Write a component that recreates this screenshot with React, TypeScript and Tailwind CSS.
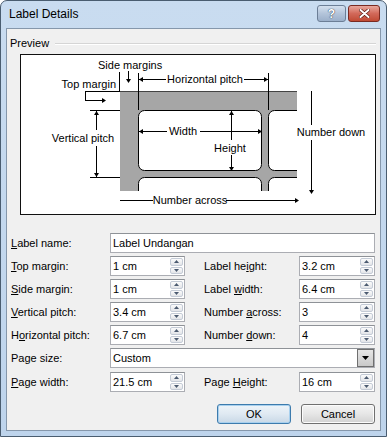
import React from 'react'

const font = "font-['Liberation_Sans',Arial,sans-serif]"

// accelerator key underline, like a Windows dialog label
function Acc({ text, at }: { text: string; at?: number }) {
  if (at === undefined) return <>{text}</>
  return (
    <>
      {text.slice(0, at)}
      <span className="underline underline-offset-[1px]">{text[at]}</span>
      {text.slice(at + 1)}
    </>
  )
}

function Tri({ up }: { up?: boolean }) {
  return (
    <svg width="5" height="3" viewBox="0 0 5 3" className="block">
      <polygon points={up ? '2.5,0 5,3 0,3' : '0,0 5,0 2.5,3'} fill="#4b5a70" />
    </svg>
  )
}

function SpinField({ value, w = 'w-[75px]' }: { value: string; w?: string }) {
  return (
    <div className={`flex h-[20px] ${w} border border-[#abadb3] border-t-[#8e9297] bg-white`}>
      <div className="flex-1 pl-[2px] leading-[18px]">{value}</div>
      <div className="flex w-[15px] flex-col gap-[1px] p-[1px]">
        <div className="flex flex-1 items-center justify-center rounded-[2px] border border-[#c4cbd6] bg-linear-to-b from-[#fbfbfb] to-[#e3e5e9]">
          <Tri up />
        </div>
        <div className="flex flex-1 items-center justify-center rounded-[2px] border border-[#c4cbd6] bg-linear-to-b from-[#fbfbfb] to-[#e3e5e9]">
          <Tri />
        </div>
      </div>
    </div>
  )
}

function Lbl({ text, at }: { text: string; at?: number }) {
  return (
    <div className="flex h-[20px] items-center">
      <span>
        <Acc text={text} at={at} />
      </span>
    </div>
  )
}

const ah = {
  r: (x: number, y: number) => `${x},${y} ${x - 4},${y - 2.5} ${x - 4},${y + 2.5}`,
  l: (x: number, y: number) => `${x},${y} ${x + 4},${y - 2.5} ${x + 4},${y + 2.5}`,
  d: (x: number, y: number) => `${x},${y} ${x - 2.5},${y - 4} ${x + 2.5},${y - 4}`,
  u: (x: number, y: number) => `${x},${y} ${x - 2.5},${y + 4} ${x + 2.5},${y + 4}`,
}

function Diagram() {
  // coordinates are page pixels; viewBox starts at the inner corner of the preview box
  const lines: [number, number, number, number][] = [
    [128.5, 70, 128.5, 79],
    [119.5, 71, 119.5, 90],
    [138.5, 72, 138.5, 109],
    [268.5, 72, 268.5, 109],
    [139, 78.5, 166, 78.5],
    [244, 78.5, 268, 78.5],
    [85, 90.5, 120, 90.5],
    [85.5, 90, 85.5, 99.5],
    [85, 99.5, 103, 99.5],
    [90, 109.5, 120, 109.5],
    [90, 176.5, 120, 176.5],
    [96.5, 110, 96.5, 129],
    [96.5, 145, 96.5, 176],
    [139, 130.5, 167, 130.5],
    [200, 130.5, 262, 130.5],
    [231.5, 110, 231.5, 139],
    [231.5, 154, 231.5, 170],
    [311.5, 90, 311.5, 124],
    [311.5, 139, 311.5, 190],
    [120, 199.5, 153, 199.5],
    [226, 199.5, 296, 199.5],
  ]
  const heads = [
    ah.d(128.5, 82),
    ah.l(139, 78.5),
    ah.r(268, 78.5),
    ah.r(106, 99.5),
    ah.u(96.5, 110),
    ah.d(96.5, 176),
    ah.l(139, 130.5),
    ah.r(262, 130.5),
    ah.u(231.5, 110),
    ah.d(231.5, 170),
    ah.d(311.5, 193),
    ah.r(299, 199.5),
  ]
  return (
    <svg width="354" height="159" viewBox="21 54 354 159" className="block">
      <defs>
        <clipPath id="sheet">
          <rect x="120" y="90" width="177" height="100" />
        </clipPath>
      </defs>
      <rect x="120" y="90" width="177" height="100" fill="#a6a6a6" />
      <g clipPath="url(#sheet)" fill="#fff" stroke="#000" strokeWidth="1">
        <rect x="138.5" y="109.5" width="123" height="60" rx="6" />
        <rect x="268.5" y="109.5" width="60" height="60" rx="6" />
        <rect x="138.5" y="176.5" width="123" height="40" rx="6" />
        <rect x="268.5" y="176.5" width="60" height="40" rx="6" />
        <line x1="120" y1="90.5" x2="297" y2="90.5" stroke="#444" />
      </g>
      <g stroke="#000" strokeWidth="1" shapeRendering="crispEdges">
        {lines.map(([x1, y1, x2, y2], i) => (
          <line key={i} x1={x1} y1={y1} x2={x2} y2={y2} />
        ))}
      </g>
      <g fill="#000">
        {heads.map((p, i) => (
          <polygon key={i} points={p} />
        ))}
      </g>
      <g fontFamily="'Liberation Sans', Arial, sans-serif" fontSize="11" fill="#000">
        <text x="98" y="68">Side margins</text>
        <text x="205" y="82" textAnchor="middle">Horizontal pitch</text>
        <text x="116" y="87" textAnchor="end">Top margin</text>
        <text x="83" y="141" textAnchor="middle">Vertical pitch</text>
        <text x="183" y="134" textAnchor="middle">Width</text>
        <text x="230" y="151" textAnchor="middle">Height</text>
        <text x="331" y="135" textAnchor="middle">Number down</text>
        <text x="190" y="203" textAnchor="middle">Number across</text>
      </g>
    </svg>
  )
}

export default function App() {
  return (
    <div className={`h-[437px] w-[387px] bg-white text-[11px] text-black ${font}`}>
      <div className="flex h-full w-full flex-col rounded-t-[7px] border border-[#4a5d70] bg-linear-to-b from-[#c9dcf0] to-[#bed4ec]">
        {/* Title bar */}
        <div className="flex h-[27px] items-start pl-[8px] pr-[6px]">
          <span className="mt-[6px] text-[12px] leading-[14px] text-black">Label Details</span>
          <div className="ml-auto mt-[4px] flex gap-[2px]">
            <div className="flex h-[17px] w-[29px] items-center justify-center rounded-[3px] border border-[#6c7e96] bg-linear-to-b from-[#d4e0ee] via-[#b3c4da] to-[#9cb0ca]">
              <span className="text-[12px] font-bold leading-none text-white [text-shadow:0_0_1px_#2c3a4c,0_0_1px_#2c3a4c]">?</span>
            </div>
            <div className="flex h-[17px] w-[32px] items-center justify-center rounded-[3px] border border-[#7a2a22] bg-linear-to-b from-[#e8a79d] via-[#d2695a] to-[#c04a34]">
              <svg width="11" height="9" viewBox="0 0 11 9">
                <path d="M1.5 1 L9.5 8 M9.5 1 L1.5 8" stroke="#5a1a12" strokeWidth="3.4" strokeLinecap="round" />
                <path d="M1.5 1 L9.5 8 M9.5 1 L1.5 8" stroke="#fff" strokeWidth="2" strokeLinecap="round" />
              </svg>
            </div>
          </div>
        </div>

        {/* Client area */}
        <div className="mx-[5px] mb-[5px] flex flex-1 flex-col border border-[#8597ab] bg-[#f0f0f0]">
          <div className="mt-[8px] flex h-[13px] items-center pl-[3px] pr-[4px]">
            <span>Preview</span>
            <div className="ml-[6px] flex-1 border-t border-b border-t-[#d5d5d5] border-b-white" />
          </div>

          <div className="ml-[13px] mt-[4px] h-[161px] w-[356px] border border-[#111] bg-white">
            <Diagram />
          </div>

          <div className="ml-[4px] mt-[18px] grid grid-cols-[99px_75px_19px_95px_76px] gap-y-[3px]">
            <Lbl text="Label name:" at={0} />
            <div className="col-span-4 h-[20px] border border-[#abadb3] border-t-[#8e9297] bg-white pl-[2px] leading-[18px]">
              Label Undangan
            </div>

            <Lbl text="Top margin:" at={0} />
            <SpinField value="1 cm" />
            <div />
            <Lbl text="Label height:" at={8} />
            <SpinField value="3.2 cm" w="w-[76px]" />

            <Lbl text="Side margin:" at={0} />
            <SpinField value="1 cm" />
            <div />
            <Lbl text="Label width:" at={6} />
            <SpinField value="6.4 cm" w="w-[76px]" />

            <Lbl text="Vertical pitch:" at={0} />
            <SpinField value="3.4 cm" />
            <div />
            <Lbl text="Number across:" at={7} />
            <SpinField value="3" w="w-[76px]" />

            <Lbl text="Horizontal pitch:" at={1} />
            <SpinField value="6.7 cm" />
            <div />
            <Lbl text="Number down:" at={7} />
            <SpinField value="4" w="w-[76px]" />

            <Lbl text="Page size:" />
            <div className="col-span-4 flex h-[20px] border border-[#abadb3] border-t-[#8e9297] bg-white">
              <div className="flex-1 pl-[2px] leading-[18px]">Custom</div>
              <div className="flex w-[17px] items-center justify-center border border-[#6f6f6f] bg-linear-to-b from-[#e6e6e6] to-[#c9c9c9]">
                <svg width="7" height="4" viewBox="0 0 7 4">
                  <polygon points="0,0 7,0 3.5,4" fill="#000" />
                </svg>
              </div>
            </div>

            <div className="col-span-5 mt-[1px] grid grid-cols-[99px_75px_19px_95px_76px]">
              <Lbl text="Page width:" at={0} />
              <SpinField value="21.5 cm" />
              <div />
              <Lbl text="Page Height:" at={5} />
              <SpinField value="16 cm" w="w-[76px]" />
            </div>
          </div>

          <div className="mt-[12px] flex justify-end gap-[10px] pr-[5px]">
            <button className="h-[20px] w-[74px] rounded-[3px] border border-[#3d7bad] bg-linear-to-b from-[#eef4f9] via-[#dfe9f2] to-[#c8d8e6] shadow-[inset_0_0_0_1px_#a8d0ee]">
              OK
            </button>
            <button className="h-[20px] w-[74px] rounded-[3px] border border-[#707070] bg-linear-to-b from-[#f4f4f4] via-[#e6e6e6] to-[#d2d2d2] shadow-[inset_0_0_0_1px_#fcfcfc]">
              Cancel
            </button>
          </div>
        </div>
      </div>
    </div>
  )
}
